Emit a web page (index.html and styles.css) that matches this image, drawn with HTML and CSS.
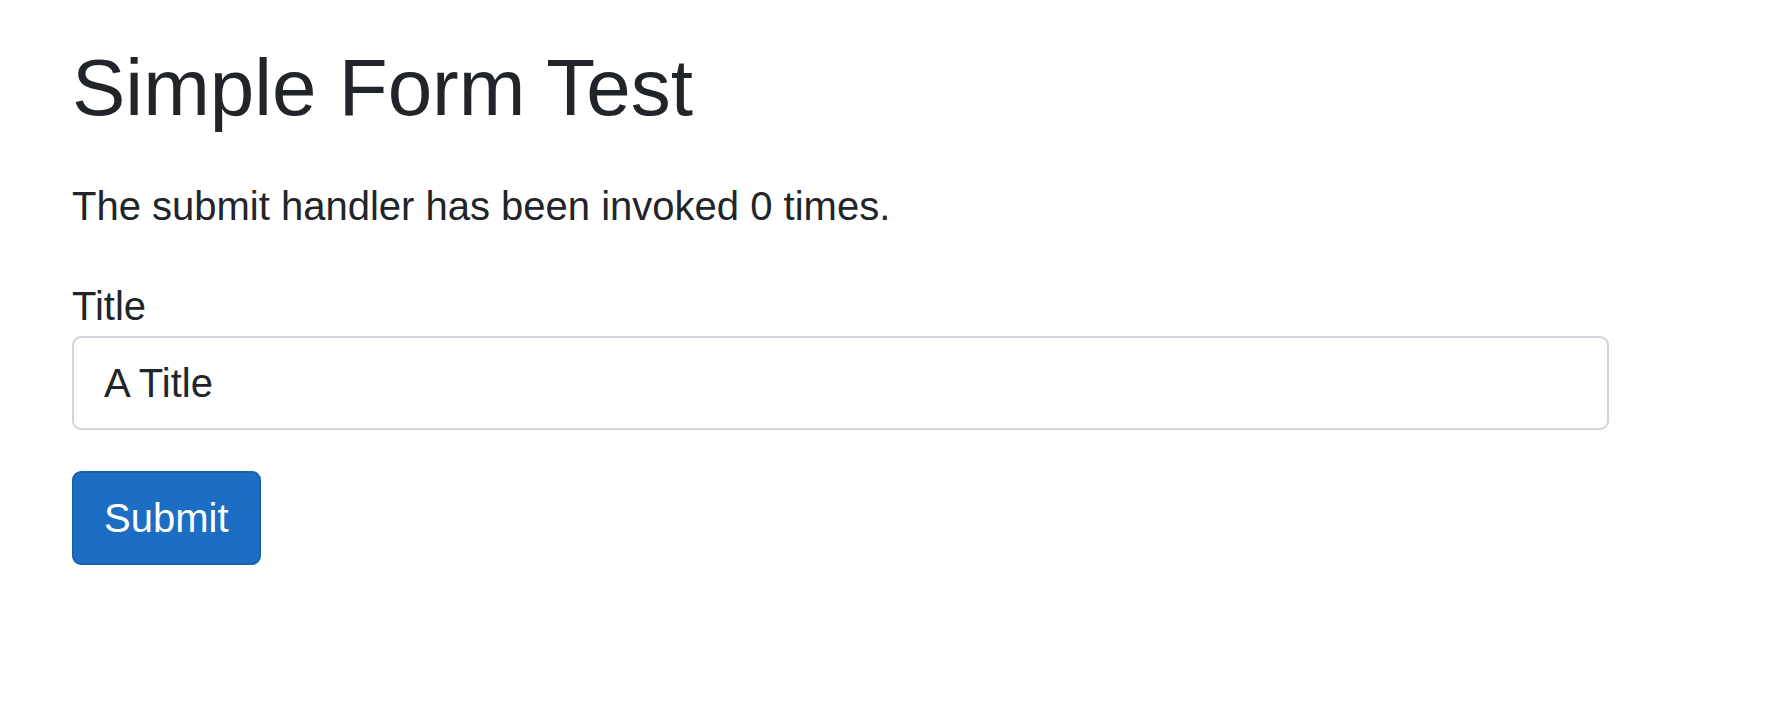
FILE: index.html
```html
<!DOCTYPE html>
<html lang="en">

<head>
    <meta charset="UTF-8">
    <meta name="viewport" content="width=device-width, initial-scale=1.0">
    <title>Simple Form Test</title>
    <link rel="stylesheet" href="styles.css">
</head>

<body>
    <main class="page">
        <h1>Simple Form Test</h1>

        <p class="counter">The submit handler has been invoked 0 times.</p>

        <form class="simple-form">
            <div class="field">
                <label for="title">Title</label>
                <input type="text" id="title" class="form-control" value="A Title">
            </div>
            <button type="submit" class="btn-primary">Submit</button>
        </form>
    </main>
</body>

</html>
```

FILE: styles.css
```css
body {
    margin: 0;
    font-family: "Liberation Sans", Arial, sans-serif;
    font-size: 40px;
    line-height: 1.5;
    color: #212529;
    background-color: #fff;
}

.page {
    padding: 40px 157px 0 72px;
}

h1 {
    margin: 0 0 40px;
    font-size: 80px;
    font-weight: 400;
    line-height: 1.2;
}

.counter {
    margin: 0 0 40px;
}

.field {
    margin-bottom: 41px;
}

label {
    display: block;
}

.form-control {
    display: block;
    box-sizing: border-box;
    width: 100%;
    padding: 15px 30px;
    margin: 0;
    font-family: inherit;
    font-size: 40px;
    line-height: 1.5;
    color: #212529;
    background-color: #fff;
    border: 2px solid #ced4da;
    border-radius: 9px;
}

.btn-primary {
    display: inline-block;
    padding: 15px 30px;
    font-family: inherit;
    font-size: 40px;
    line-height: 1.5;
    color: #fff;
    background-color: #1b6ec2;
    border: 2px solid #1861ac;
    border-radius: 9px;
    cursor: pointer;
}
```
